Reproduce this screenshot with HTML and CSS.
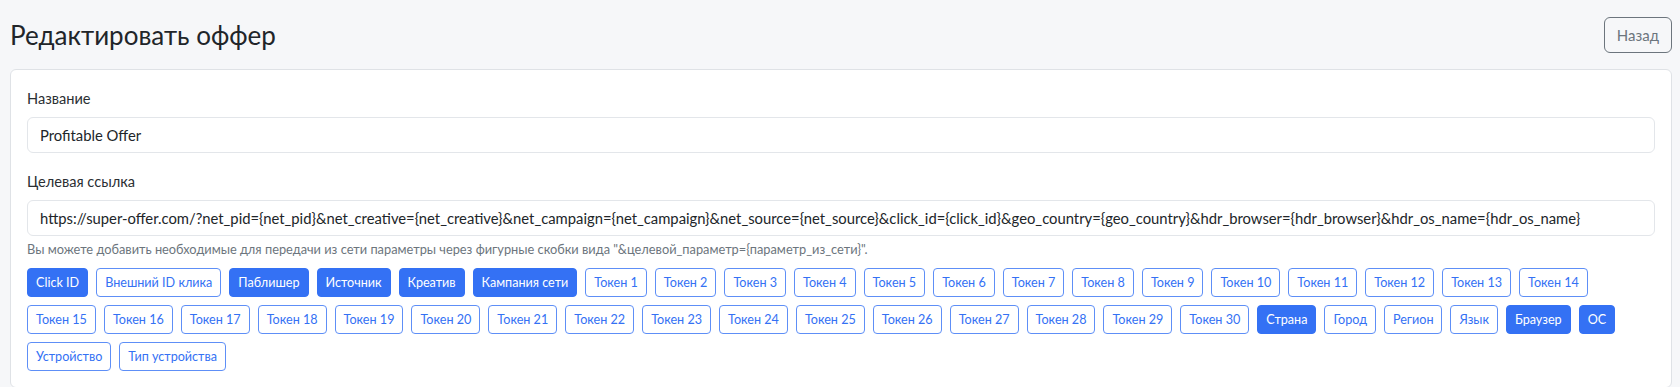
FILE: index.html
```html
<!DOCTYPE html>
<html lang="ru">
<head>
    <meta charset="UTF-8">
    <meta name="viewport" content="width=device-width, initial-scale=1.0">
    <title>Редактировать оффер</title>
    <link rel="stylesheet" href="styles.css">
</head>
<body>
    <div class="page">
        <div class="page-header">
            <h1>Редактировать оффер</h1>
            <button class="btn-back">Назад</button>
        </div>

        <div class="card">
            <div class="form-group">
                <label for="offerName">Название</label>
                <input type="text" id="offerName" value="Profitable Offer">
            </div>
            <div class="form-group">
                <label for="offerUrl">Целевая ссылка</label>
                <input type="text" id="offerUrl" value="https://super-offer.com/?net_pid={net_pid}&amp;net_creative={net_creative}&amp;net_campaign={net_campaign}&amp;net_source={net_source}&amp;click_id={click_id}&amp;geo_country={geo_country}&amp;hdr_browser={hdr_browser}&amp;hdr_os_name={hdr_os_name}">
                <div class="hint">Вы можете добавить необходимые для передачи из сети параметры через фигурные скобки вида "&amp;целевой_параметр={параметр_из_сети}".</div>
            </div>

            <div class="tokens" id="tokens"></div>
        </div>
    </div>

    <script src="script.js"></script>
</body>
</html>
```

FILE: styles.css
```css
* {
    box-sizing: border-box;
}
body {
    margin: 0;
    background-color: #f6f7f9;
    font-family: Lato, "Noto Sans", sans-serif;
    color: #212529;
    overflow: hidden;
}
.page {
    padding: 17px 8px 0 10px;
}
.page-header {
    display: flex;
    justify-content: space-between;
    align-items: center;
    margin-bottom: 16px;
}
.page-header h1 {
    margin: 0;
    font-size: 26px;
    font-weight: 400;
    line-height: 36px;
    color: #212529;
}
.btn-back {
    height: 36px;
    padding: 0 12px;
    font-family: inherit;
    font-size: 15px;
    color: #6c757d;
    background: transparent;
    border: 1px solid #6c757d;
    border-radius: 6px;
}
.card {
    background-color: #fff;
    border: 1px solid #dfe2e6;
    border-radius: 6px;
    padding: 18px 16px 16px;
}
.form-group {
    margin-bottom: 18px;
}
.form-group label {
    display: block;
    font-size: 14.6px;
    line-height: 21px;
    margin-bottom: 8px;
    color: #2b2f33;
}
.form-group input {
    display: block;
    width: 100%;
    height: 36px;
    padding: 0 12px;
    font-family: inherit;
    font-size: 14.8px;
    color: #212529;
    border: 1px solid #e3e6ea;
    border-radius: 6px;
    outline: none;
}
.hint {
    margin-top: 4px;
    font-size: 12.8px;
    line-height: 18px;
    color: #6c757d;
}
.tokens {
    display: flex;
    flex-wrap: wrap;
    gap: 8px;
    margin-top: -8px;
}
.token {
    padding: 4px 8px;
    font-family: inherit;
    font-size: 12.6px;
    line-height: 19px;
    color: #3471f4;
    background: #fff;
    border: 1px solid #5e8ff7;
    border-radius: 4px;
}
.token.active {
    color: #fff;
    background-color: #3471f4;
    border-color: #3471f4;
}
```

FILE: script.js
```js
const tokens = document.getElementById('tokens');

const items = [
    ['Click ID', true],
    ['Внешний ID клика', false],
    ['Паблишер', true],
    ['Источник', true],
    ['Креатив', true],
    ['Кампания сети', true]
];

for (let i = 1; i <= 30; i++) {
    items.push(['Токен ' + i, false]);
}

items.push(
    ['Страна', true],
    ['Город', false],
    ['Регион', false],
    ['Язык', false],
    ['Браузер', true],
    ['ОС', true],
    ['Устройство', false],
    ['Тип устройства', false]
);

items.forEach(([label, active]) => {
    const btn = document.createElement('button');
    btn.className = active ? 'token active' : 'token';
    btn.textContent = label;
    tokens.appendChild(btn);
});
```
